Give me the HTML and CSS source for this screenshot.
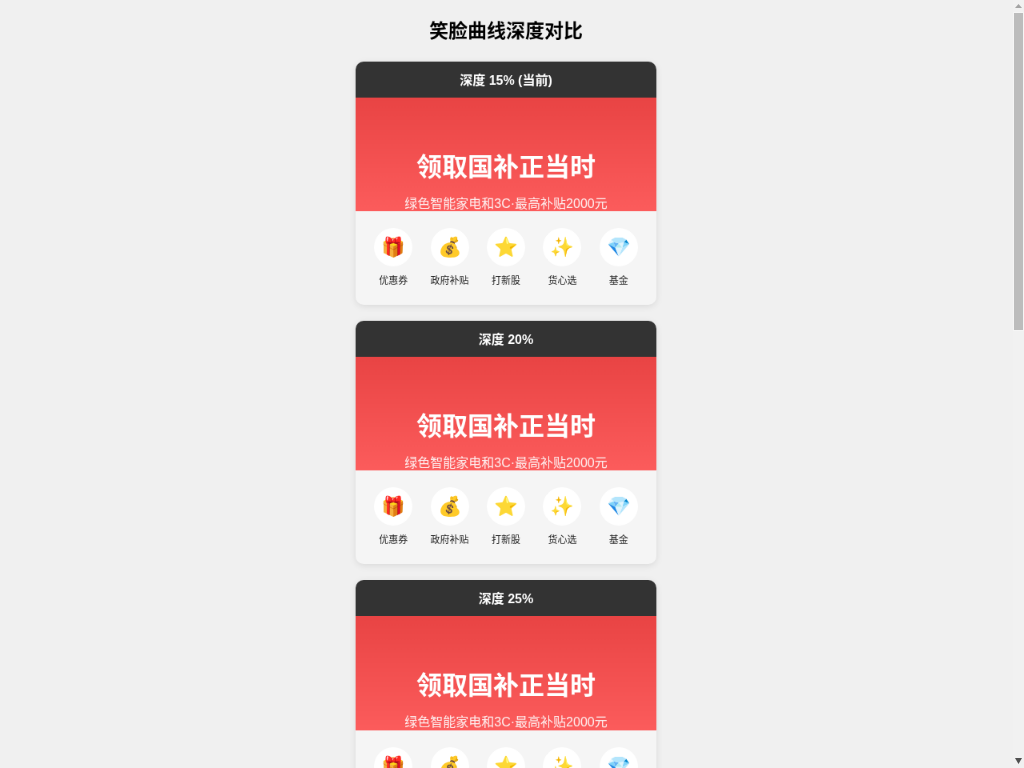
FILE: index.html
```html
<!DOCTYPE html>
<html lang="zh-CN">
<head>
  <meta charset="UTF-8" />
  <meta name="viewport" content="width=device-width, initial-scale=1.0"/>
  <title>笑脸曲线深度对比</title>
  <link rel="stylesheet" href="styles.css">
</head>
<body>
  <div class="page">
    <h1 class="page-title">笑脸曲线深度对比</h1>

    <div class="card">
      <div class="card-label">深度 15% (当前)</div>
      <div class="hero">
        <div class="hero-title">领取国补正当时</div>
        <div class="hero-sub">绿色智能家电和3C·最高补贴2000元</div>
      </div>
      <div class="nav">
        <div class="nav-item"><div class="nav-icon">🎁</div><div class="nav-text">优惠券</div></div>
        <div class="nav-item"><div class="nav-icon">💰</div><div class="nav-text">政府补贴</div></div>
        <div class="nav-item"><div class="nav-icon">⭐</div><div class="nav-text">打新股</div></div>
        <div class="nav-item"><div class="nav-icon">✨</div><div class="nav-text">货心选</div></div>
        <div class="nav-item"><div class="nav-icon">💎</div><div class="nav-text">基金</div></div>
      </div>
    </div>

    <div class="card">
      <div class="card-label">深度 20%</div>
      <div class="hero">
        <div class="hero-title">领取国补正当时</div>
        <div class="hero-sub">绿色智能家电和3C·最高补贴2000元</div>
      </div>
      <div class="nav">
        <div class="nav-item"><div class="nav-icon">🎁</div><div class="nav-text">优惠券</div></div>
        <div class="nav-item"><div class="nav-icon">💰</div><div class="nav-text">政府补贴</div></div>
        <div class="nav-item"><div class="nav-icon">⭐</div><div class="nav-text">打新股</div></div>
        <div class="nav-item"><div class="nav-icon">✨</div><div class="nav-text">货心选</div></div>
        <div class="nav-item"><div class="nav-icon">💎</div><div class="nav-text">基金</div></div>
      </div>
    </div>

    <div class="card">
      <div class="card-label">深度 25%</div>
      <div class="hero">
        <div class="hero-title">领取国补正当时</div>
        <div class="hero-sub">绿色智能家电和3C·最高补贴2000元</div>
      </div>
      <div class="nav">
        <div class="nav-item"><div class="nav-icon">🎁</div><div class="nav-text">优惠券</div></div>
        <div class="nav-item"><div class="nav-icon">💰</div><div class="nav-text">政府补贴</div></div>
        <div class="nav-item"><div class="nav-icon">⭐</div><div class="nav-text">打新股</div></div>
        <div class="nav-item"><div class="nav-icon">✨</div><div class="nav-text">货心选</div></div>
        <div class="nav-item"><div class="nav-icon">💎</div><div class="nav-text">基金</div></div>
      </div>
    </div>
  </div>

  <div class="scrollbar">
    <svg class="scroll-arrow" width="11" height="12" viewBox="0 0 11 12"><path d="M5.5 4 L9 8 H2 Z" fill="#a3a3a3"/></svg>
    <div class="scroll-thumb"></div>
    <svg class="scroll-arrow scroll-arrow-down" width="11" height="12" viewBox="0 0 11 12"><path d="M2 2 H9 L5.5 8 Z" fill="#505050"/></svg>
  </div>
</body>
</html>
```

FILE: styles.css
```css
body {
  font-family: "Liberation Sans", Arial, "Noto Sans CJK SC", sans-serif;
  margin: 0;
  padding: 20px 32px 20px 20px;
  background-color: #f0f0f0;
}

/* everything is drawn at phone width, then shrunk */
.page {
  width: 376px;
  margin: 0 auto;
  transform: scale(0.8);
  transform-origin: top center;
  will-change: transform;
}

.page-title {
  font-size: 24px;
  line-height: 28px;
  margin: 0 0 23.7px;
  text-align: center;
  color: #000;
  white-space: nowrap;
}

.card {
  margin-bottom: 20.2px;
  border-radius: 10px;
  overflow: hidden;
  background-color: #f5f5f5;
  box-shadow: 0 2px 10px rgba(0, 0, 0, 0.1);
}

.card-label {
  padding: 13px 12px 11px;
  line-height: 21px;
  text-align: center;
  font-size: 16px;
  font-weight: bold;
  color: #fff;
  background-color: #333;
}

.hero {
  height: 142.5px;
  overflow: hidden;
  padding-top: 64px;
  box-sizing: border-box;
  text-align: center;
  color: #fff;
  background: linear-gradient(180deg, #e94444, #fc5c5c);
}

.hero-title {
  font-size: 32px;
  font-weight: bold;
  line-height: 46px;
  margin-bottom: 11px;
}

.hero-sub {
  font-size: 16px;
  line-height: 24px;
  opacity: 0.9;
}

.nav {
  display: flex;
  height: 116.5px;
  box-sizing: border-box;
  padding: 21px 12px 0;
}

.nav-item {
  display: flex;
  flex-direction: column;
  align-items: center;
  flex: 1;
}

.nav-icon {
  width: 48px;
  height: 48px;
  border-radius: 50%;
  background-color: #fff;
  display: flex;
  align-items: center;
  justify-content: center;
  font-size: 24px;
  margin-bottom: 10px;
}

.nav-text {
  font-size: 12px;
  line-height: 17px;
  color: #222;
}

.scrollbar {
  position: fixed;
  top: 0;
  right: 0;
  bottom: 0;
  width: 11px;
  display: flex;
  flex-direction: column;
  background-color: #f1f1f1;
}

.scroll-arrow {
  display: block;
}

.scroll-arrow-down {
  margin-top: auto;
}

.scroll-thumb {
  height: 319px;
  box-sizing: border-box;
  background-color: #bcbcbc;
  border: 1px solid #f5f5f5;
}
```
